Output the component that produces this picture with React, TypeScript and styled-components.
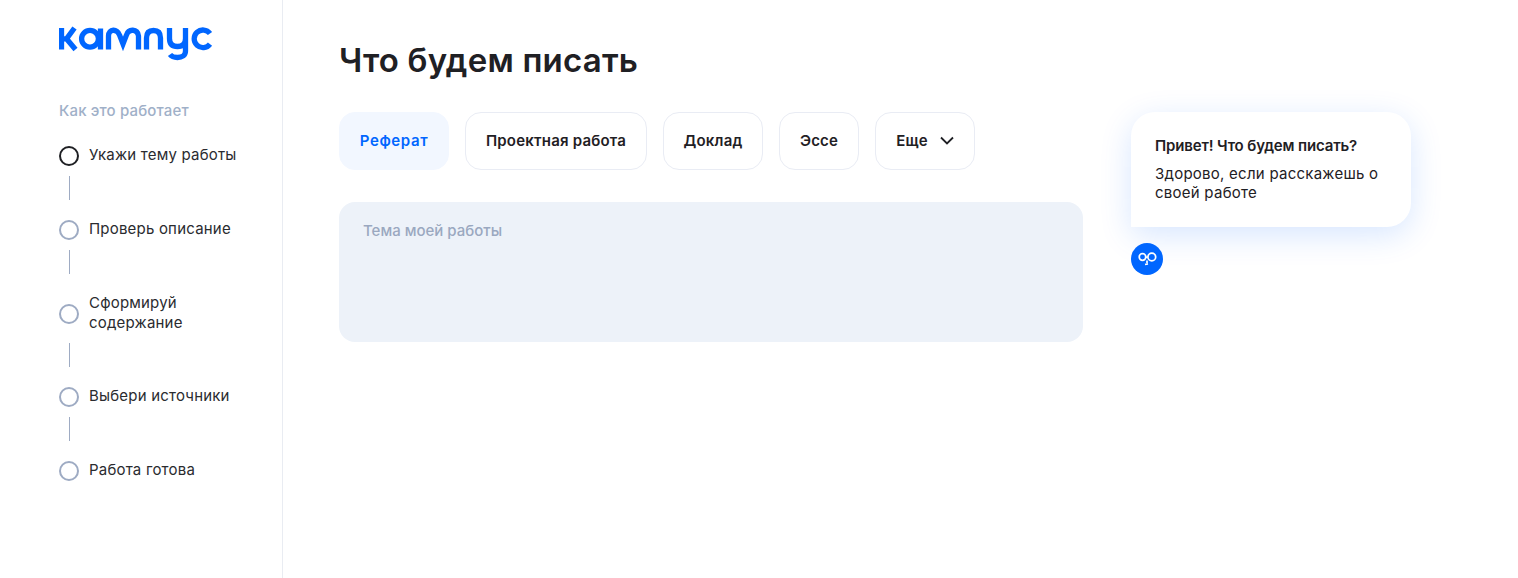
import React from "react"
import styled, { createGlobalStyle } from "styled-components"

const FONT = `Inter, "Noto Sans", sans-serif`

const GlobalStyle = createGlobalStyle`
	html, body {
		margin: 0;
		padding: 0;
		background: #fff;
		font-family: ${FONT};
		color: #1f2024;
	}
	* {
		box-sizing: border-box;
	}
`

const steps = [
	{ label: "Укажи тему работы", active: true },
	{ label: "Проверь описание" },
	{ label: "Сформируй содержание" },
	{ label: "Выбери источники" },
	{ label: "Работа готова" },
]

const tabs = [
	{ label: "Реферат", width: 110, active: true },
	{ label: "Проектная работа", width: 182 },
	{ label: "Доклад", width: 100 },
	{ label: "Эссе", width: 80 },
]

const Logo = () => (
	<LogoSvg width="156" height="36" viewBox="0 0 156 36" fill="none">
		<g stroke="#0066ff" strokeWidth="5.300">
			<path d="M2.500 2v21.500M3 12.800h4.500L15.500 2M7.500 12.800l9 10.700" />
			<circle cx="31" cy="12.800" r="8.400" />
			<path d="M41.500 2.500v21" />
			<path d="M49.500 23.500V10c0-7.500 9-7.500 11-1l3.500 9 3.500-9c2-6.500 11-6.500 12 1v13.500" />
			<path d="M87.500 23.500V12c0-5.500 3-7.500 7-7.500s7 2 7 7.500v11.500" />
			<path d="M110.500 2v10.500c0 5.500 3 8 8 8s8-2.500 8-8V2M126.500 12v13c0 4.500-3.500 6.500-8 6.500-3.500 0-6-1-7.500-3" />
			<path d="M151 7.500a8.800 8.800 0 1 0 0 10.600" />
		</g>
	</LogoSvg>
)

const Chevron = () => (
	<svg width="14" height="9" viewBox="0 0 14 9" fill="none">
		<path d="M1 1.500l6 6 6-6" stroke="#1f2024" strokeWidth="1.800" />
	</svg>
)

const BotFace = () => (
	<svg width="22" height="16" viewBox="0 0 22 16" fill="none">
		<g stroke="#fff" strokeWidth="1.700">
			<circle cx="6.500" cy="6" r="3.300" />
			<circle cx="15.800" cy="6" r="3.900" />
			<path d="M9.800 6.500c.8-.6 1.300-.6 2 0M11 9.500v2.500M9 13.500l3-.6" />
		</g>
	</svg>
)

export default function App() {
	return (
		<>
			<GlobalStyle />
			<Page>
				<Sidebar>
					<Logo />
					<StepsTitle>Как это работает</StepsTitle>
					<StepList>
						{steps.map((step, i) => (
							<li key={step.label}>
								<StepRow>
									<StepDot $active={step.active} />
									<StepLabel>{step.label}</StepLabel>
								</StepRow>
								{i < steps.length - 1 && <StepLine />}
							</li>
						))}
					</StepList>
				</Sidebar>
				<Main>
					<Title>Что будем писать</Title>
					<Columns>
						<Form>
							<Tabs>
								{tabs.map((tab) => (
									<Tab key={tab.label} $active={tab.active} $width={tab.width}>
										{tab.label}
									</Tab>
								))}
								<MoreTab $width={100}>
									Еще
									<Chevron />
								</MoreTab>
							</Tabs>
							<TopicInput placeholder="Тема моей работы" />
						</Form>
						<Assistant>
							<Bubble>
								<BubbleTitle>Привет! Что будем писать?</BubbleTitle>
								<BubbleText>Здорово, если расскажешь о своей работе</BubbleText>
							</Bubble>
							<Avatar>
								<BotFace />
							</Avatar>
						</Assistant>
					</Columns>
				</Main>
			</Page>
		</>
	)
}

const Page = styled.div`
	display: flex;
	height: 578px;
	overflow: hidden;
`

const Sidebar = styled.aside`
	width: 283px;
	flex-shrink: 0;
	padding: 26px 0 0 59px;
	border-right: 1px solid #e9ecf2;
`

const LogoSvg = styled.svg`
	display: block;
`

const StepsTitle = styled.div`
	margin-top: 39px;
	font-size: 15px;
	line-height: 20px;
	font-weight: 500;
	letter-spacing: 0.15px;
	color: #9fb0c8;
`

const StepList = styled.ul`
	list-style: none;
	margin: 25px 0 0;
	padding: 0;
`

const StepRow = styled.div`
	display: flex;
	align-items: center;
	gap: 10px;
`

const StepDot = styled.span<{ $active?: boolean }>`
	width: 20px;
	height: 20px;
	flex-shrink: 0;
	border-radius: 50%;
	border: 2px solid ${(p) => (p.$active ? "#1f2024" : "#9eabc3")};
`

const StepLabel = styled.span`
	width: 150px;
	transform: translateY(-1px);
	font-size: 15px;
	line-height: 19.5px;
	font-weight: 400;
	letter-spacing: 0.2px;
	color: #2a2b2f;
`

const StepLine = styled.div`
	width: 1px;
	height: 24px;
	margin: 10px 0 20px 10px;
	background: #9eabc3;
`

const Main = styled.main`
	flex: 1;
	padding: 0 0 0 56px;
`

const Title = styled.h1`
	margin: 39px 0 0;
	font-size: 33px;
	line-height: 42px;
	font-weight: 600;
	letter-spacing: 0.2px;
	color: #1f2024;
`

const Columns = styled.div`
	display: flex;
	gap: 48px;
	margin-top: 31px;
`

const Form = styled.div`
	width: 744px;
`

const Tabs = styled.div`
	display: flex;
	gap: 16px;
`

const Tab = styled.button<{ $active?: boolean; $width: number }>`
	width: ${(p) => p.$width}px;
	height: 58px;
	padding: 0 0 1px;
	border-radius: 16px;
	border: 1px solid ${(p) => (p.$active ? "#f2f7ff" : "#e9ecf4")};
	background: ${(p) => (p.$active ? "#f2f7ff" : "#fff")};
	color: ${(p) => (p.$active ? "#0066ff" : "#1f2024")};
	font-family: ${FONT};
	font-size: 15px;
	font-weight: 600;
	letter-spacing: ${(p) => (p.$active ? "0.6px" : "0.2px")};
`

const MoreTab = styled(Tab)`
	display: flex;
	align-items: center;
	justify-content: center;
	gap: 12px;
`

const TopicInput = styled.textarea`
	display: block;
	width: 100%;
	height: 140px;
	margin-top: 32px;
	padding: 19px 24px;
	border: none;
	border-radius: 16px;
	background: #edf2f9;
	resize: none;
	outline: none;
	font-family: ${FONT};
	font-size: 15px;
	font-weight: 500;
	line-height: 20px;

	&::placeholder {
		color: #9aa8c0;
		opacity: 1;
	}
`

const Assistant = styled.div`
	width: 280px;
`

const Bubble = styled.div`
	height: 115px;
	padding: 24px;
	border-radius: 24px 24px 24px 0;
	background: #fff;
	box-shadow: 0 8px 32px rgba(0, 102, 255, 0.16);
`

const BubbleTitle = styled.div`
	font-size: 15px;
	line-height: 19.500px;
	font-weight: 600;
	letter-spacing: -0.15px;
	color: #1f2024;
`

const BubbleText = styled.div`
	margin-top: 8px;
	font-size: 15px;
	line-height: 19.500px;
	letter-spacing: 0.25px;
	color: #1f2024;
`

const Avatar = styled.div`
	display: flex;
	align-items: center;
	justify-content: center;
	width: 32px;
	height: 32px;
	margin-top: 16px;
	border-radius: 50%;
	background: #0066ff;
`
